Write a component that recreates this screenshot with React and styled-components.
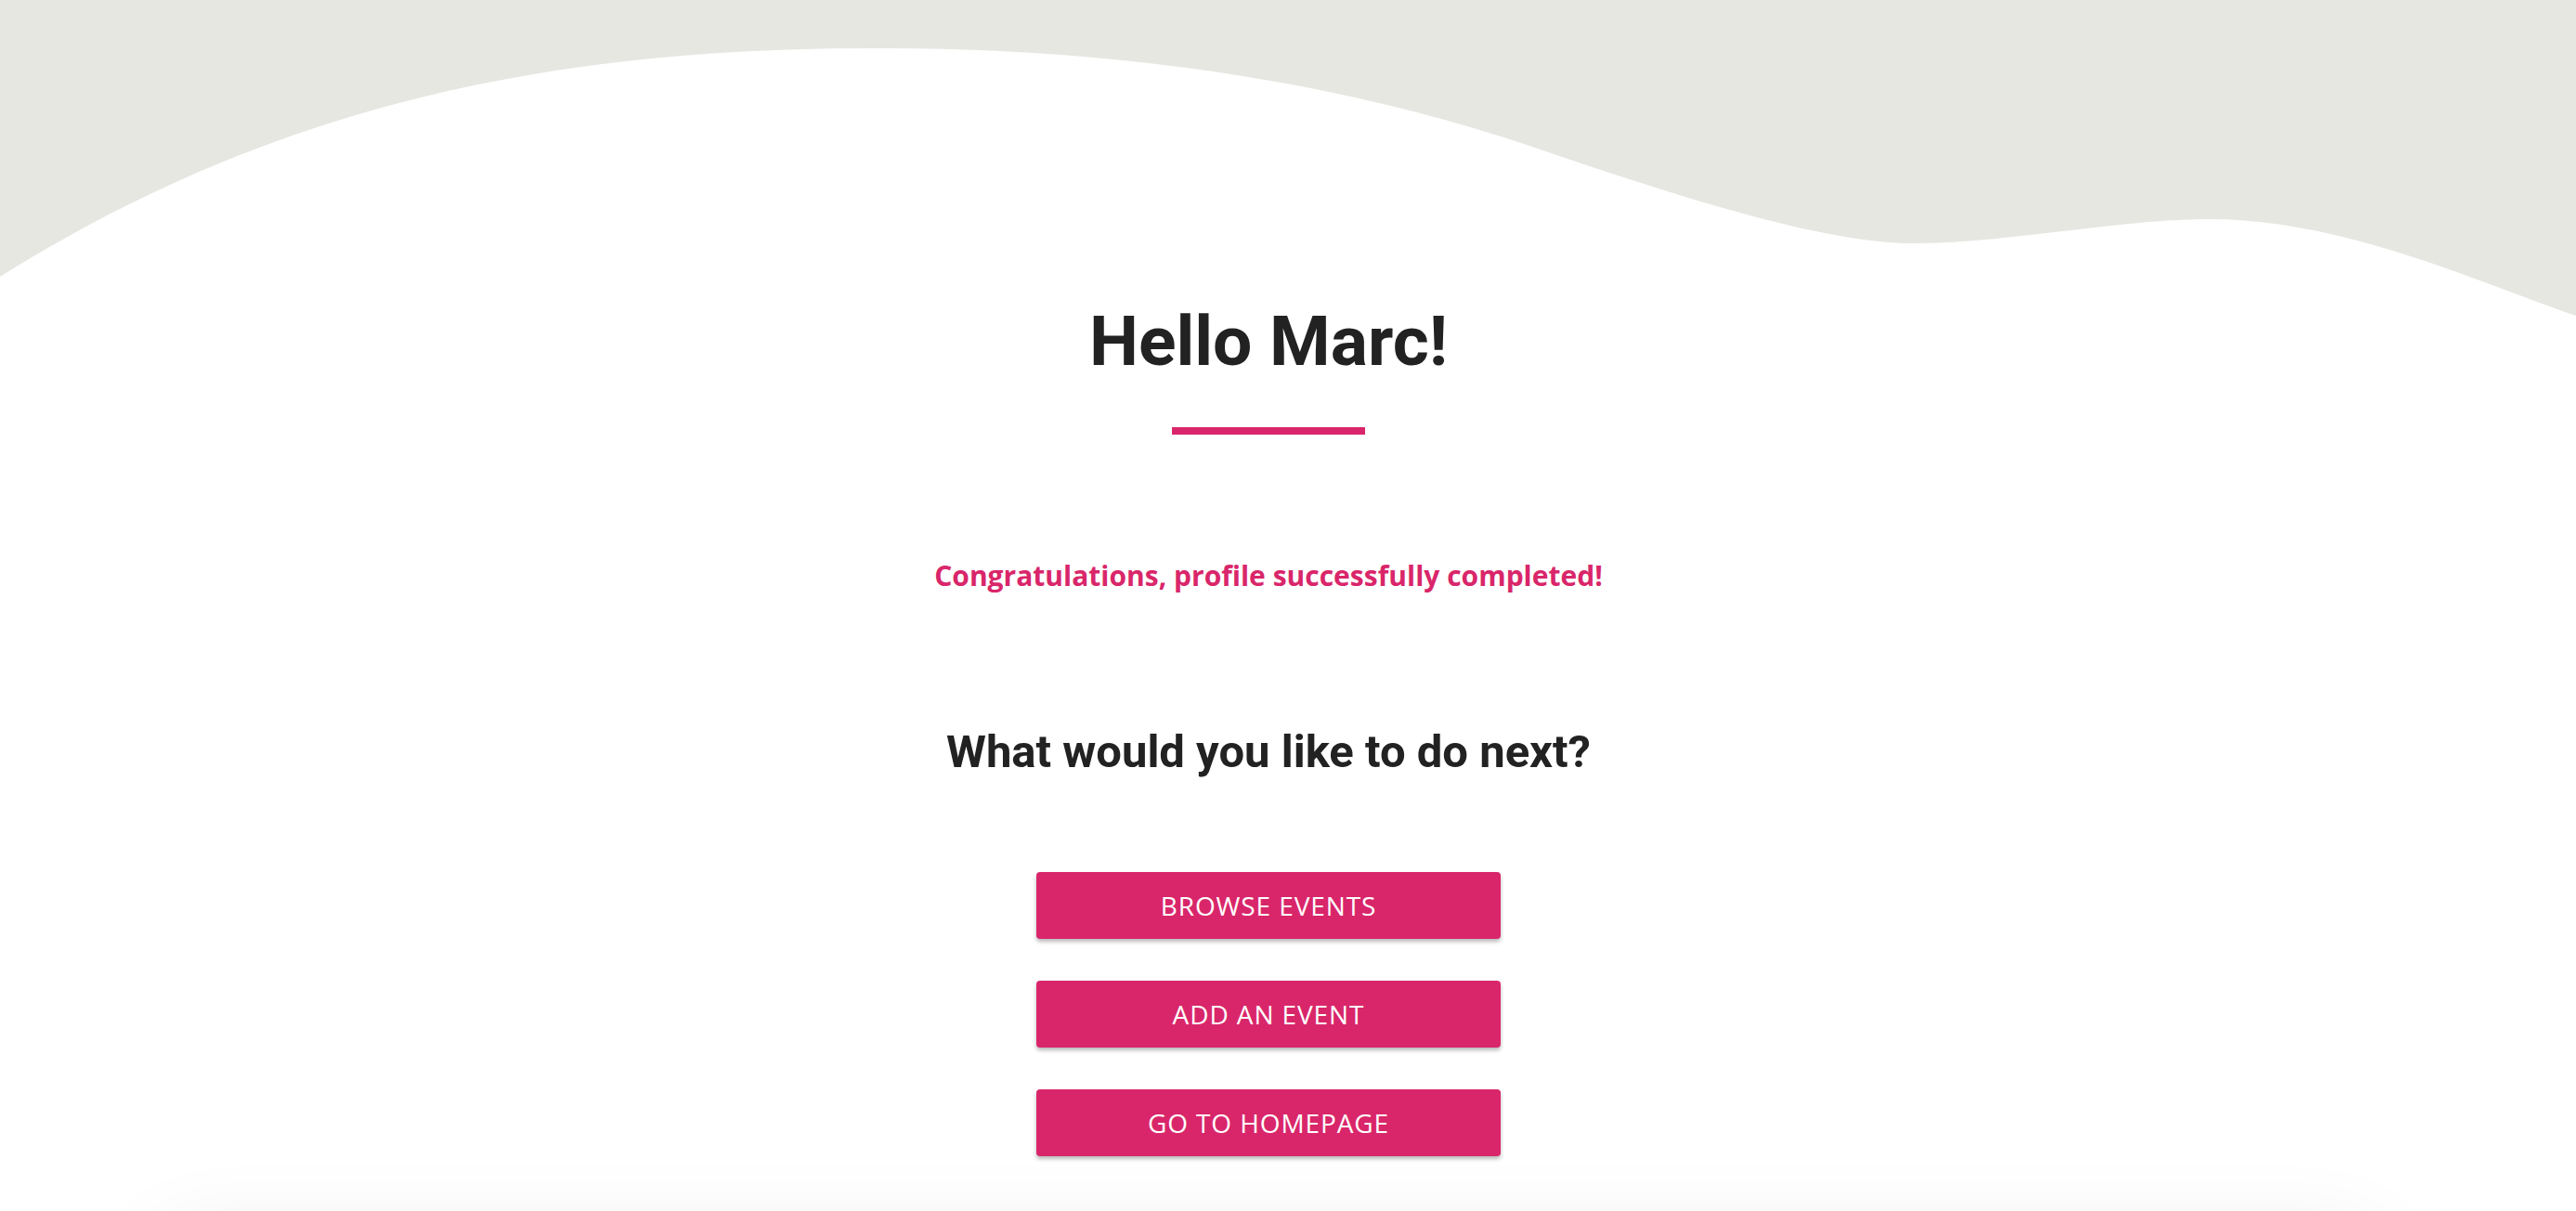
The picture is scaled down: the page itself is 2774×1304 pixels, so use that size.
import styled, { createGlobalStyle } from 'styled-components';

const PINK = '#d9266a';

const GlobalStyle = createGlobalStyle`
  html, body {
    margin: 0;
    padding: 0;
    background: #ffffff;
  }
  body {
    font-family: 'Open Sans', 'Liberation Sans', sans-serif;
    color: #222222;
  }
  * {
    box-sizing: border-box;
  }
`;

const Page = styled.div`
  position: relative;
  min-height: 100vh;
  overflow: hidden;
  background: #ffffff;
`;

const WaveBackdrop = styled.svg`
  position: absolute;
  top: 0;
  left: 0;
  width: 100%;
  height: 340px;
  display: block;
`;

const Content = styled.main`
  position: relative;
  display: flex;
  flex-direction: column;
  align-items: center;
  padding: 322px 42px 0 0;
`;

const Title = styled.h1`
  margin: 0;
  font-family: Roboto, 'Liberation Sans', sans-serif;
  font-size: 75px;
  line-height: 1.2;
  font-weight: 700;
  color: #222222;
`;

const Underline = styled.div`
  width: 208px;
  height: 8px;
  margin-top: 48px;
  background: ${PINK};
`;

const Message = styled.p`
  margin: 128px 0 0;
  font-family: 'Open Sans', 'Liberation Sans', sans-serif;
  font-size: 30px;
  line-height: 48px;
  font-weight: 700;
  color: ${PINK};
`;

const Question = styled.h2`
  margin: 137px 0 0;
  font-family: Roboto, 'Liberation Sans', sans-serif;
  font-size: 49px;
  line-height: 1.2;
  font-weight: 700;
  color: #222222;
`;

const ButtonStack = styled.div`
  display: flex;
  flex-direction: column;
  gap: 45px;
  margin-top: 99px;
`;

const ActionButton = styled.button`
  width: 500px;
  height: 72px;
  padding: 0;
  border: none;
  border-radius: 4px;
  background: ${PINK};
  color: #ffffff;
  font-family: 'Open Sans', 'Liberation Sans', sans-serif;
  font-size: 28px;
  font-weight: 400;
  text-transform: uppercase;
  letter-spacing: 0.9px;
  box-shadow: 0 3px 4px rgba(0, 0, 0, 0.28);
  cursor: pointer;
`;

const FooterCard = styled.section`
  height: 400px;
  margin: 94px 224px 0 182px;
  background: #ffffff;
  box-shadow: 0 0 90px rgba(0, 0, 0, 0.1);
`;

const ACTIONS = ['Browse events', 'Add an event', 'Go to homepage'];

const App = () => {
  return (
    <>
      <GlobalStyle />
      <Page>
        <WaveBackdrop viewBox="0 0 2774 340" preserveAspectRatio="none" aria-hidden="true">
          <path
            fill="#e6e7e1"
            d="M0 298 C300 110 600 52 937 52 C1200 50 1450 90 1647 157 C1797 208 1960 262 2060 262 C2160 262 2280 236 2380 236 C2520 236 2660 300 2774 340 L2774 0 L0 0 Z"
          />
        </WaveBackdrop>
        <Content>
          <Title>Hello Marc!</Title>
          <Underline />
          <Message>Congratulations, profile successfully completed!</Message>
          <Question>What would you like to do next?</Question>
          <ButtonStack>
            {ACTIONS.map((label) => (
              <ActionButton key={label} type="button">
                {label}
              </ActionButton>
            ))}
          </ButtonStack>
        </Content>
        <FooterCard />
      </Page>
    </>
  );
};

export default App;
